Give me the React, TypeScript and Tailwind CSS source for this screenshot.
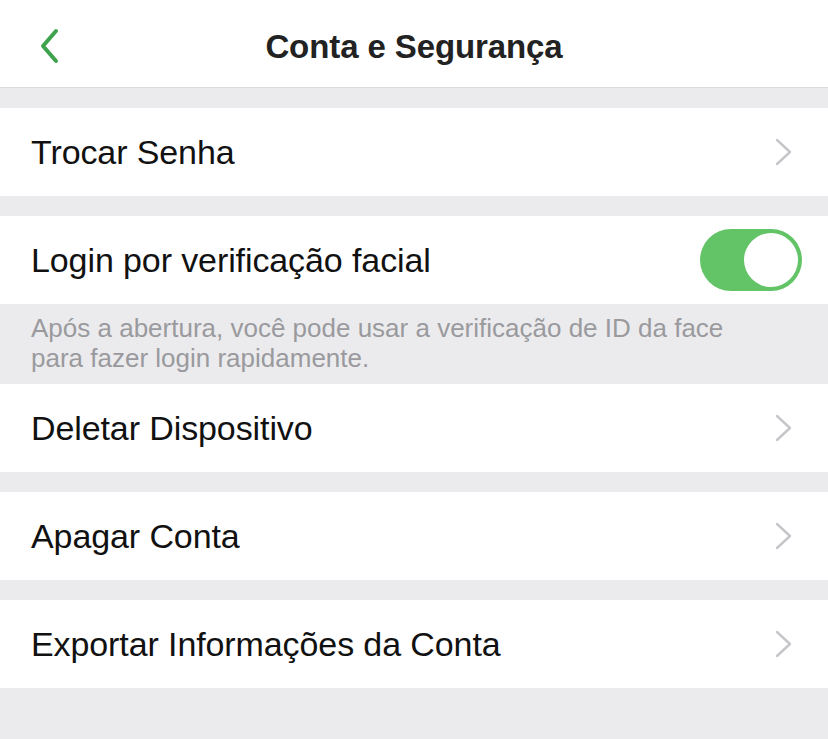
const font = { fontFamily: '"Liberation Sans", Arial, sans-serif' };

function Chevron() {
    return (
        <svg width="20" height="28" viewBox="0 0 20 28" fill="none">
            <path d="M3 2 L16 14 L3 26" stroke="#c6c6ca" strokeWidth="2.4" strokeLinecap="round" strokeLinejoin="round" />
        </svg>
    );
}

function Row({ label, children }: { label: string; children?: React.ReactNode }) {
    return (
        <div className="h-[88px] bg-white flex items-center justify-between pl-[31px] pr-[34px]">
            <span className="text-[34px] text-[#111] tracking-[-0.1px]">{label}</span>
            {children ?? <Chevron />}
        </div>
    );
}

function Toggle() {
    return (
        <div className="w-[102px] h-[62px] rounded-full bg-[#62c466] flex items-center justify-end pr-[4px] -mr-[8px]">
            <div className="w-[54px] h-[54px] rounded-full bg-white" />
        </div>
    );
}

export default function App() {
    return (
        <div className="w-[828px] h-[739px] bg-[#ebebed] flex flex-col" style={font}>
            <div className="h-[88px] bg-white border-b border-[#dcdcdc] relative flex items-center justify-center pt-[6px]">
                <svg className="absolute left-[36px] top-[28px]" width="28" height="36" viewBox="0 0 28 36" fill="none">
                    <path d="M20 3 L7 18 L20 33" stroke="#3fa34d" strokeWidth="4" strokeLinecap="round" strokeLinejoin="round" />
                </svg>
                <span className="text-[33px] font-bold text-[#222] tracking-[-0.1px]">Conta e Segurança</span>
            </div>
            <div className="h-[20px]" />
            <Row label="Trocar Senha" />
            <div className="h-[20px]" />
            <Row label="Login por verificação facial">
                <Toggle />
            </Row>
            <div className="h-[80px] pl-[31px] pr-[60px] pt-[9px] text-[26px] leading-[30px] text-[#9a9a9e]">
                Após a abertura, você pode usar a verificação de ID da face para fazer login rapidamente.
            </div>
            <Row label="Deletar Dispositivo" />
            <div className="h-[20px]" />
            <Row label="Apagar Conta" />
            <div className="h-[20px]" />
            <Row label="Exportar Informações da Conta" />
        </div>
    );
}
